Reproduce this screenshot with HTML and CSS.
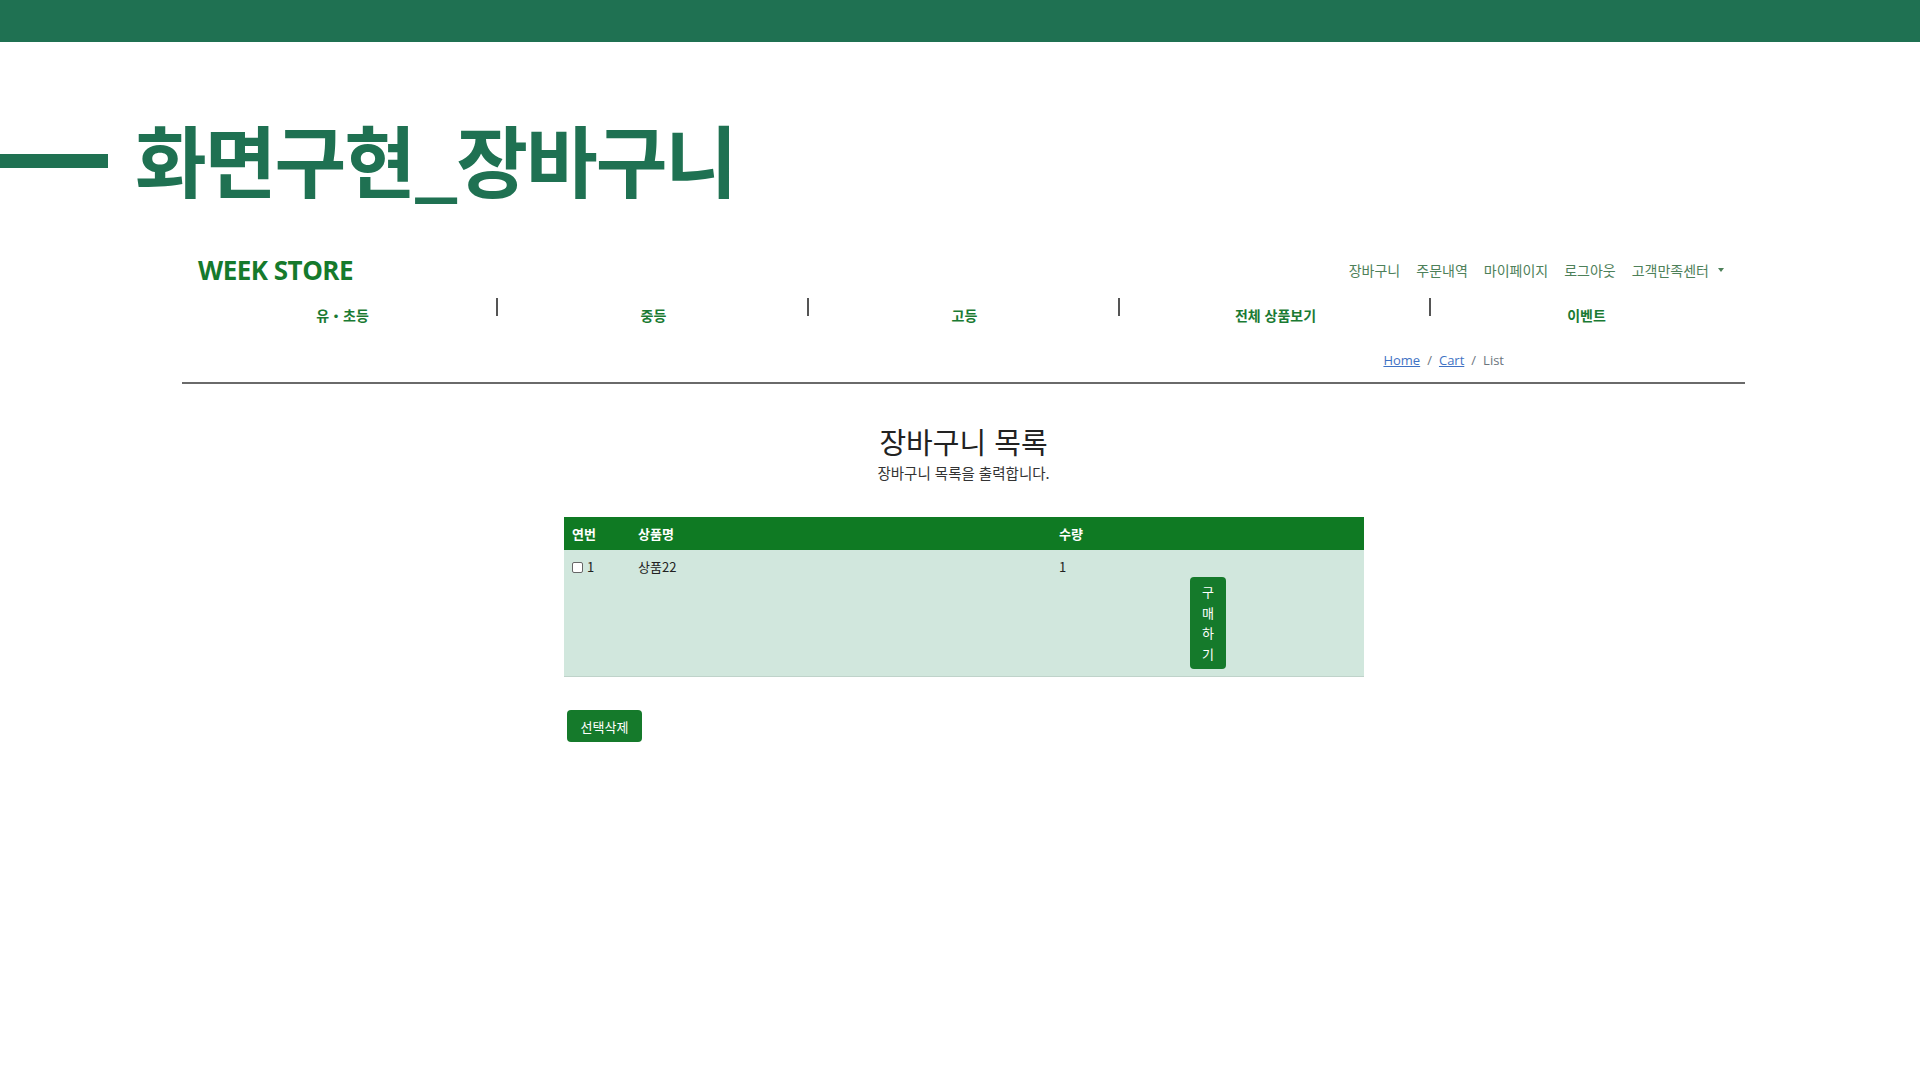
FILE: index.html
```html
<!DOCTYPE html>
<html lang="ko">
<head>
<meta charset="utf-8">
<title>화면구현_장바구니</title>
<link rel="stylesheet" href="styles.css">
</head>
<body>
<div class="topbar"></div>
<div class="title-row">
  <div class="dash"></div>
  <h1 class="slide-title">화면구현_장바구니</h1>
</div>
<div class="container">
  <div class="brand-row">
    <div class="brand">WEEK STORE</div>
    <ul class="user-links">
      <li>장바구니</li>
      <li>주문내역</li>
      <li>마이페이지</li>
      <li>로그아웃</li>
      <li class="dropdown">고객만족센터<span class="caret"></span></li>
    </ul>
  </div>
  <ul class="cat-nav">
    <li class="cat">유・초등</li>
    <li class="cat">중등</li>
    <li class="cat">고등</li>
    <li class="cat">전체 상품보기</li>
    <li class="cat last">이벤트</li>
  </ul>
  <div class="breadcrumb">
    <a class="crumb-link">Home</a><span class="sep">/</span><a class="crumb-link">Cart</a><span class="sep">/</span><span class="crumb-active">List</span>
  </div>
  <div class="rule"></div>
  <div class="page-head">
    <h2 class="page-title">장바구니 목록</h2>
    <p class="page-sub">장바구니 목록을 출력합니다.</p>
  </div>
  <div class="cart">
    <table class="cart-table">
      <thead>
        <tr>
          <th class="c1">연번</th>
          <th class="c2">상품명</th>
          <th class="c3">수량</th>
          <th class="c4"></th>
        </tr>
      </thead>
      <tbody>
        <tr>
          <td class="c1"><span class="chk"></span>1</td>
          <td class="c2">상품22</td>
          <td class="c3">1</td>
          <td class="c4"><button class="buy-btn">구매하기</button></td>
        </tr>
      </tbody>
    </table>
    <button class="del-btn">선택삭제</button>
  </div>
</div>
</body>
</html>
```
FILE: styles.css
```css
* { box-sizing: border-box; }
body {
  margin: 0;
  background: #ffffff;
  font-family: "Noto Sans CJK KR", "Noto Sans", sans-serif;
  color: #222;
}
.topbar {
  height: 42px;
  background: #1f7152;
}
.title-row {
  display: flex;
  align-items: center;
  gap: 27px;
  margin-top: 76px;
  height: 80px;
}
.dash {
  width: 108px;
  height: 14px;
  margin-top: 6px;
  background: #1f7152;
}
.slide-title {
  margin: 0;
  font-size: 78px;
  line-height: 80px;
  font-weight: 700;
  letter-spacing: -2px;
  color: #1f7152;
}
.container {
  width: 1563px;
  margin-left: 182px;
  margin-top: 52px;
}
.brand-row {
  display: flex;
  justify-content: space-between;
  align-items: center;
  padding: 0 21px 0 16px;
  height: 40px;
}
.brand {
  font-family: "Open Sans", "Noto Sans", sans-serif;
  font-weight: 700;
  font-size: 26px;
  letter-spacing: -0.5px;
  color: #157a2c;
}
.user-links {
  list-style: none;
  margin: 0;
  padding: 0;
  display: flex;
  gap: 16px;
  font-size: 14px;
  color: #4d8059;
}
.dropdown { display: flex; align-items: center; }
.caret {
  display: inline-block;
  margin-left: 9px;
  border-top: 4px solid #4d8059;
  border-left: 3.5px solid transparent;
  border-right: 3.5px solid transparent;
}
.cat-nav {
  list-style: none;
  margin: 8px 0 0 5px;
  padding: 0;
  display: grid;
  grid-template-columns: repeat(5, 311px);
  height: 34px;
}
.cat {
  position: relative;
  text-align: center;
  font-size: 14px;
  font-weight: 700;
  color: #1a7a33;
  padding-top: 7px;
}
.cat::after {
  content: "";
  position: absolute;
  right: 0;
  top: 0;
  width: 2px;
  height: 18px;
  background: #555;
}
.cat.last::after { display: none; }
.breadcrumb {
  display: flex;
  justify-content: flex-end;
  padding-right: 241px;
  font-family: "Open Sans", "Noto Sans", sans-serif;
  font-size: 13px;
  margin-top: 18px;
  height: 20px;
  align-items: center;
}
.crumb-link {
  color: #3f72c4;
  text-decoration: underline;
}
.sep {
  color: #6c757d;
  padding: 0 7px;
}
.crumb-active { color: #6c757d; }
.rule {
  height: 2px;
  background: #6a6a6a;
  margin-top: 12px;
}
.page-head {
  text-align: center;
  margin-top: 37px;
}
.page-title {
  margin: 0;
  font-size: 29px;
  font-weight: 400;
  line-height: 40px;
  color: #222;
}
.page-sub {
  margin: 2px 0 0;
  font-size: 14.5px;
  line-height: 20px;
  color: #333;
}
.cart {
  width: 800px;
  margin: 34px 0 0 382px;
}
.cart-table {
  width: 800px;
  border-collapse: collapse;
  font-size: 13px;
}
.cart-table th {
  background: #0f7a23;
  color: #fff;
  font-weight: 700;
  text-align: left;
  height: 33px;
  padding: 0 8px;
}
.cart-table td {
  background: #d1e7dd;
  vertical-align: top;
  padding: 8px 8px 7px;
  color: #222;
  border-bottom: 1px solid #bfd3ca;
  line-height: 18px;
}
.c1 { width: 66px; }
.c2 { width: 421px; }
.c3 { width: 131px; }
.c4 { width: 182px; }
.chk {
  display: inline-block;
  width: 11px;
  height: 11px;
  border: 1px solid #666;
  border-radius: 2px;
  background: #fff;
  vertical-align: -1px;
  margin-right: 4px;
}
.buy-btn {
  display: block;
  margin: 19px 0 0 0;
  width: 36px;
  padding: 5px 10px;
  border: none;
  border-radius: 4px;
  background: #157a2b;
  color: #fff;
  font-family: "Noto Sans CJK KR", sans-serif;
  font-size: 13px;
  line-height: 20.5px;
  text-align: center;
}
.del-btn {
  margin: 33px 0 0 3px;
  width: 75px;
  height: 32px;
  padding: 0;
  border: none;
  border-radius: 4px;
  background: #157a2b;
  color: #fff;
  font-family: "Noto Sans CJK KR", sans-serif;
  font-size: 13px;
}
```
